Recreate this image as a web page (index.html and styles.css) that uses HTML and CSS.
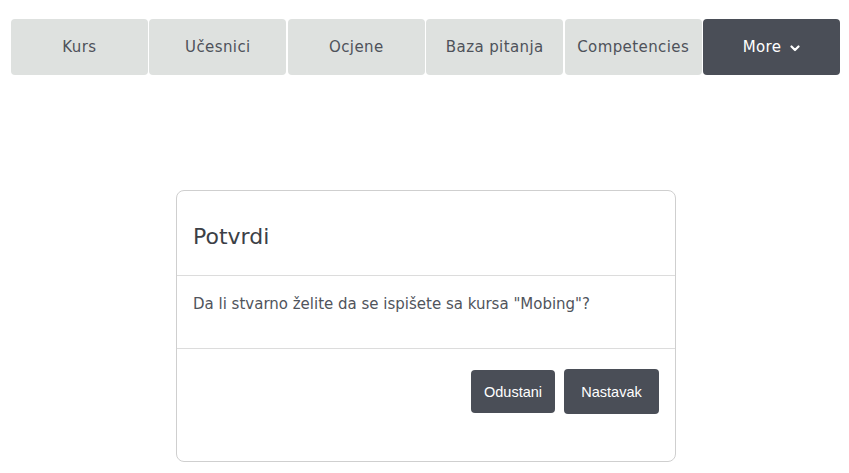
FILE: index.html
```html
<!DOCTYPE html>
<html lang="hr">
<head>
<meta charset="utf-8">
<title>Potvrdi</title>
<link rel="stylesheet" href="styles.css">
</head>
<body>
<nav class="tabs">
  <a class="tab">Kurs</a>
  <a class="tab">Učesnici</a>
  <a class="tab">Ocjene</a>
  <a class="tab">Baza pitanja</a>
  <a class="tab">Competencies</a>
  <a class="tab tab-more">More
    <svg class="chev" width="10" height="7" viewBox="0 0 10 7"><path d="M1.5 1.5 L5 5 L8.5 1.5" fill="none" stroke="#fff" stroke-width="2.2" stroke-linecap="round" stroke-linejoin="round"/></svg>
  </a>
</nav>
<main class="wrap">
  <section class="card">
    <header class="card-head"><h4 class="title">Potvrdi</h4></header>
    <div class="card-body"><p class="msg">Da li stvarno želite da se ispišete sa kursa "Mobing"?</p></div>
    <footer class="card-foot">
      <button class="btn btn-sm">Odustani</button>
      <button class="btn btn-lg">Nastavak</button>
    </footer>
  </section>
</main>
</body>
</html>
```
FILE: styles.css
```css
html, body { margin: 0; padding: 0; background: #fff; }
body { font-family: "DejaVu Sans", sans-serif; color: #4a4e57; }
.tabs {
  display: flex;
  gap: 1.5px;
  margin: 19px 9px 0 11px;
  height: 56px;
}
.tab {
  flex: 1;
  display: flex;
  align-items: center;
  justify-content: center;
  background: #dee1df;
  border-radius: 4px;
  font-size: 15px;
  color: #4e525a;
  letter-spacing: 0.4px;
}
.tab-more { background: #4a4e57; color: #fff; gap: 9px; }
.chev { display: block; margin-top: 2px; }
.wrap { display: flex; justify-content: center; padding: 115px 0 0 3px; }
.card {
  width: 498px;
  height: 270px;
  border: 1px solid #cfcfcf;
  border-radius: 8px;
  display: flex;
  flex-direction: column;
}
.card-head { height: 84px; border-bottom: 1px solid #dcdcdc; display: flex; align-items: center; padding: 0 16px; }
.title { margin: 6px 0 0; font-weight: normal; font-size: 22px; color: #3c3f46; }
.card-body { height: 72px; border-bottom: 1px solid #dcdcdc; padding: 0 16px; }
.msg { margin: 19px 0 0; font-size: 15px; color: #50545c; }
.card-foot { display: flex; justify-content: flex-end; gap: 9px; padding: 20px 16px 0; }
.btn {
  background: #4a4e57;
  color: #fff;
  border: none;
  border-radius: 4px;
  font-family: "Liberation Sans", Arial, sans-serif;
  font-size: 14.5px;
  padding: 0;
}
.btn-sm { width: 84px; height: 43px; margin-top: 1px; }
.btn-lg { width: 95px; height: 45px; }
```
